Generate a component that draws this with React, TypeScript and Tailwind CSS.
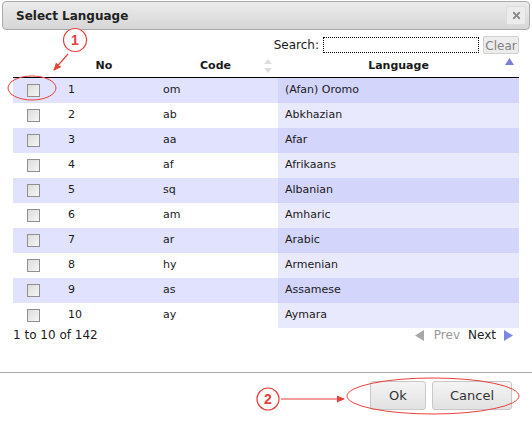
import { X } from 'lucide-react';

const rows = [
  ['1', 'om', '(Afan) Oromo'],
  ['2', 'ab', 'Abkhazian'],
  ['3', 'aa', 'Afar'],
  ['4', 'af', 'Afrikaans'],
  ['5', 'sq', 'Albanian'],
  ['6', 'am', 'Amharic'],
  ['7', 'ar', 'Arabic'],
  ['8', 'hy', 'Armenian'],
  ['9', 'as', 'Assamese'],
  ['10', 'ay', 'Aymara'],
];

function Checkbox() {
  return (
    <span className="block w-[13px] h-[13px] border border-[#8f8f8f] bg-gradient-to-br from-[#dcdcdc] to-[#f6f6f6]" />
  );
}

export default function App() {
  return (
    <div
      className="relative w-[532px] h-[421px] bg-white text-[11px] text-[#1a1a1a] overflow-hidden"
      style={{ fontFamily: '"DejaVu Sans", Verdana, sans-serif' }}
    >
      {/* title bar */}
      <div className="mx-[2px] mt-[1px] h-[29px] flex items-center justify-between pl-[13px] pr-[3px] rounded-[4px] border border-[#aaa] bg-gradient-to-b from-[#ececec] to-[#d6d6d6]">
        <span className="font-bold text-[12px] text-[#222]">Select Language</span>
        <button className="w-[20px] h-[19px] flex items-center justify-center rounded-[2px] bg-[#ececec] border border-[#ddd]">
          <X size={11} strokeWidth={4} className="text-[#8a8a8a]" />
        </button>
      </div>

      {/* search */}
      <div className="flex items-center justify-end gap-[4px] pr-[13px] mt-[5px] h-[19px]">
        <span className="text-[12px]">Search:</span>
        <input className="w-[156px] h-[16px] border border-dotted border-black outline-none" />
        <button className="h-[18px] w-[36px] rounded-[2px] border border-[#d0d0d0] bg-[#ececec] text-[#808080] text-[12px]">
          Clear
        </button>
      </div>

      {/* table */}
      <div className="mx-[13px] mt-[4px]">
        <div className="grid grid-cols-[40px_100px_125px_241px] h-[20px] pb-[2px] border-b border-black font-bold items-center">
          <span />
          <span className="text-center pl-[2px]">No</span>
          <span className="relative text-center">
            Code
            <svg className="absolute right-[6px] top-[1px]" width="8" height="14" viewBox="0 0 8 14">
              <path d="M4 0 L8 5 L0 5 Z" fill="#ddd" />
              <path d="M4 14 L8 9 L0 9 Z" fill="#ddd" />
            </svg>
          </span>
          <span className="relative text-center">
            Language
            <svg className="absolute right-[5px] top-[0px]" width="9" height="7" viewBox="0 0 9 7">
              <path d="M4.5 0 L9 7 L0 7 Z" fill="#7b7fdc" />
            </svg>
          </span>
        </div>
        {rows.map(([no, code, lang], i) => (
          <div
            key={no}
            className={`grid grid-cols-[40px_100px_125px_241px] h-[25px] items-center ${
              i % 2 === 0 ? 'bg-[#e1e2fd]' : 'bg-white'
            }`}
          >
            <span className="flex justify-center">
              <Checkbox />
            </span>
            <span className="pl-[15px]">{no}</span>
            <span className="pl-[10px]">{code}</span>
            <span
              className={`h-full flex items-center pl-[7px] ${
                i % 2 === 0 ? 'bg-[#d3d5fa]' : 'bg-[#e9e9fd]'
              }`}
            >
              {lang}
            </span>
          </div>
        ))}
        <div className="flex items-center justify-between h-[14px]">
          <span className="text-[12px]">1 to 10 of 142</span>
          <div className="flex items-center gap-[8px] pr-[6px] text-[12px]">
            <span className="flex items-center gap-[10px] text-[#999]">
              <svg width="9" height="11" viewBox="0 0 9 11">
                <path d="M0 5.5 L9 0 L9 11 Z" fill="#a8a8a8" />
              </svg>
              Prev
            </span>
            <span className="flex items-center gap-[8px] text-[#222]">
              Next
              <svg width="9" height="11" viewBox="0 0 9 11">
                <path d="M9 5.5 L0 0 L0 11 Z" fill="#7d86e6" />
              </svg>
            </span>
          </div>
        </div>
      </div>

      {/* footer */}
      <div className="mt-[30px] border-t border-[#aaa] flex justify-end gap-[6px] pt-[8px] pr-[20px]">
        <button className="w-[56px] h-[29px] rounded-[3px] border border-[#c8c8c8] bg-gradient-to-b from-[#f4f4f4] to-[#e2e2e2] text-[13px] text-[#333]">
          Ok
        </button>
        <button className="w-[80px] h-[29px] rounded-[3px] border border-[#c8c8c8] bg-gradient-to-b from-[#f4f4f4] to-[#e2e2e2] text-[13px] text-[#333]">
          Cancel
        </button>
      </div>

      {/* annotations */}
      <svg className="absolute inset-0 pointer-events-none" width="532" height="421" viewBox="0 0 532 421">
        <defs>
          <marker id="ah" markerWidth="8" markerHeight="8" refX="7" refY="4" orient="auto" markerUnits="userSpaceOnUse">
            <path d="M0 0.5 L8 4 L0 7.5 Z" fill="#e8413a" />
          </marker>
        </defs>
        <circle cx="75" cy="40" r="11.5" fill="white" stroke="#e8413a" strokeWidth="1.2" />
        <text x="75" y="45" textAnchor="middle" fontSize="14" fontWeight="bold" fill="#e8413a" fontFamily="Liberation Sans, sans-serif">1</text>
        <line x1="68" y1="54" x2="54" y2="70" stroke="#e8413a" strokeWidth="1.2" markerEnd="url(#ah)" />
        <ellipse cx="32" cy="88" rx="24" ry="12" fill="none" stroke="#e8413a" strokeWidth="1" />

        <circle cx="268" cy="399" r="11" fill="white" stroke="#e8413a" strokeWidth="1.2" />
        <text x="268" y="404" textAnchor="middle" fontSize="14" fontWeight="bold" fill="#e8413a" fontFamily="Liberation Sans, sans-serif">2</text>
        <line x1="281" y1="399" x2="344" y2="399" stroke="#e8413a" strokeWidth="1.2" markerEnd="url(#ah)" />
        <ellipse cx="433" cy="396" rx="86" ry="18" fill="none" stroke="#e8413a" strokeWidth="1" />
      </svg>
    </div>
  );
}
